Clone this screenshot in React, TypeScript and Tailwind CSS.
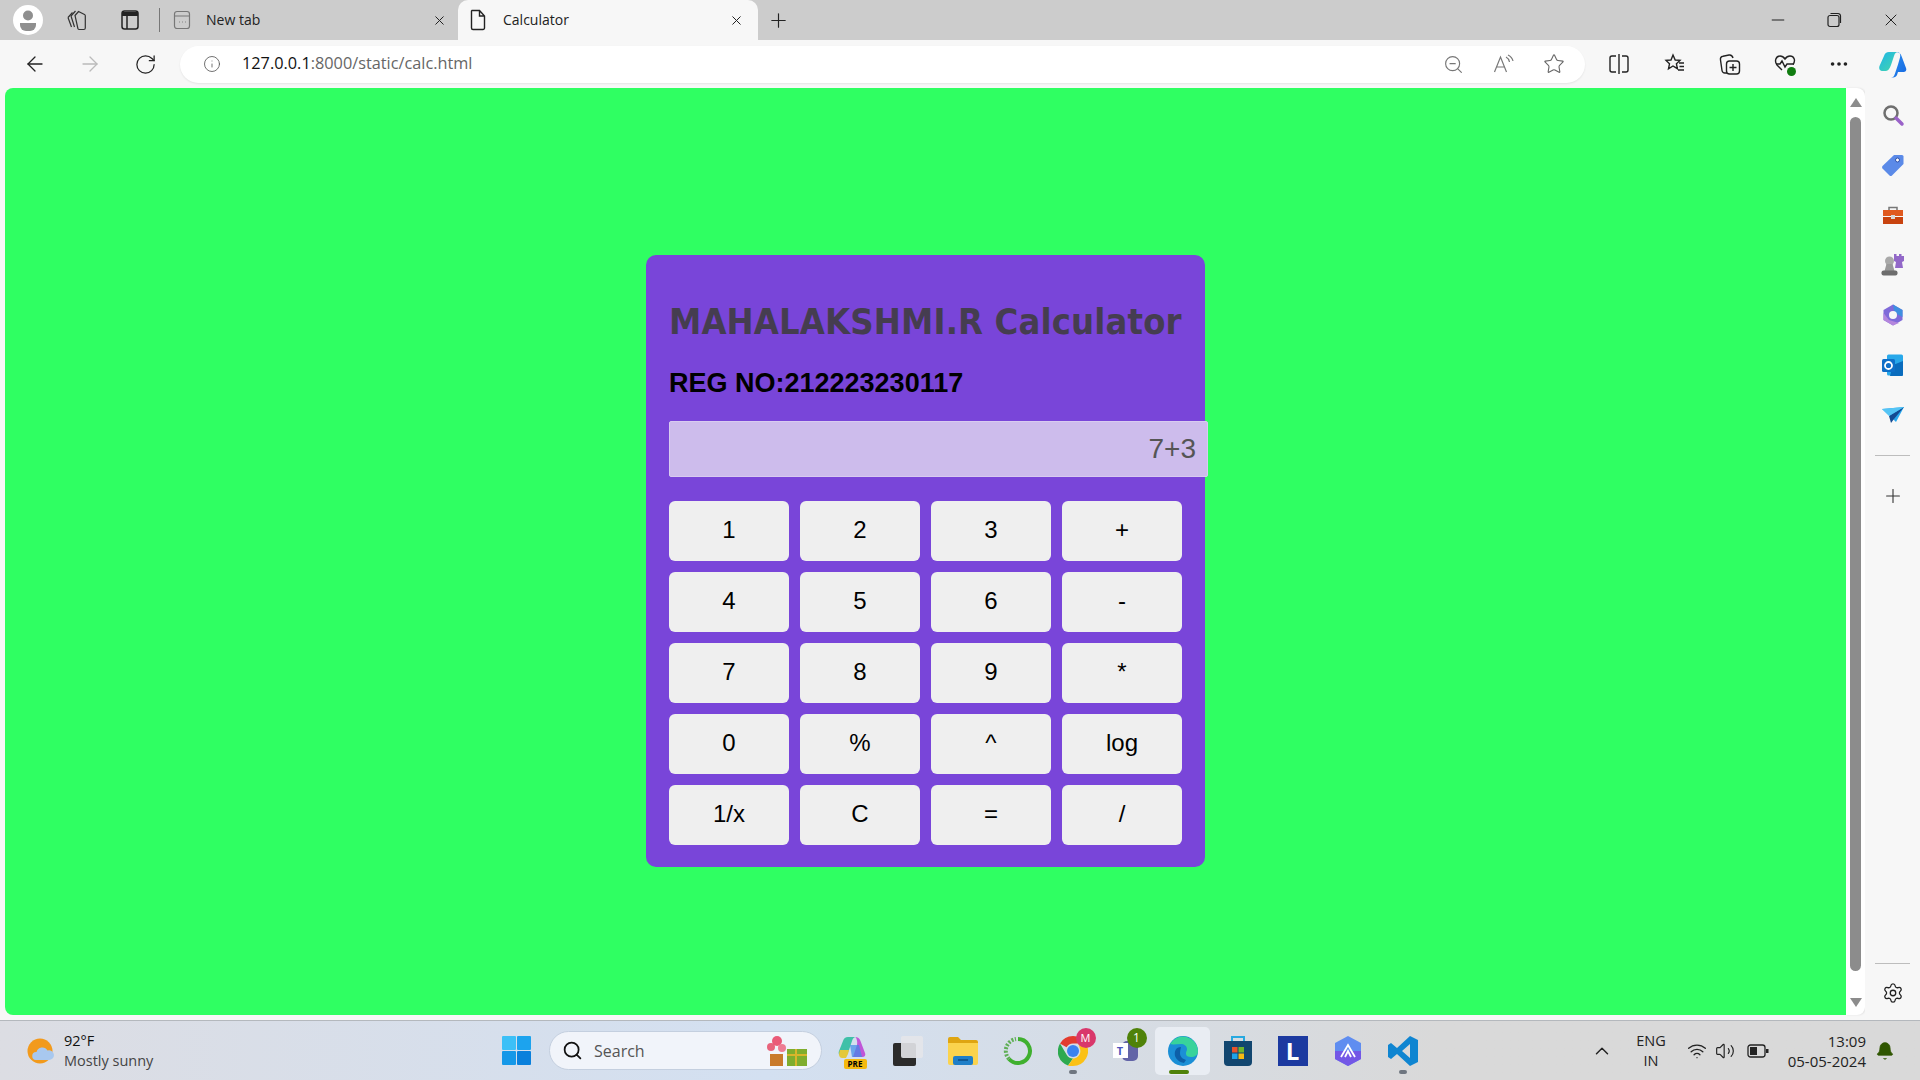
import { ArrowLeft, ArrowRight, Bell, ChevronUp, Info, Minus, MoreHorizontal, Plus, RotateCw, Search, Settings, Star, Volume2, Wifi, X, ZoomOut } from 'lucide-react';

const sans = 'font-["Open_Sans",sans-serif]';

const keys = ['1', '2', '3', '+', '4', '5', '6', '-', '7', '8', '9', '*', '0', '%', '^', 'log', '1/x', 'C', '=', '/'];

function Calculator() {
  return (
    <div className='w-[559px] h-[612px] bg-[#7945d9] rounded-[10px] pt-[46px] px-[23px] font-["Liberation_Sans",sans-serif]'>
      <h1 className='h-[42px] font-["DejaVu_Sans_Condensed","DejaVu_Sans",sans-serif] font-bold text-[36px] leading-[42px] tracking-[0.15px] text-[#453d50] whitespace-nowrap'>
        MAHALAKSHMI.R Calculator
      </h1>
      <h2 className="mt-[24px] h-[32px] font-bold text-[27px] leading-[32px] text-black">REG NO:212223230117</h2>
      <div className="mt-[22px] w-[539px] h-[56px] bg-[#cdbcec] border border-[#d8cbf0] rounded-[2px] pr-[11px] flex items-center justify-end text-[28px] text-[#555]">
        7+3
      </div>
      <div className="mt-[24px] grid grid-cols-[repeat(4,120px)] auto-rows-[60px] gap-[11px]">
        {keys.map(key => (
          <button key={key} className="bg-[#efefef] rounded-[6px] pb-[2px] text-[24px] text-black">
            {key}
          </button>
        ))}
      </div>
    </div>
  );
}

function Tab({ title, active, icon }: { title: string; active?: boolean; icon: React.ReactNode }) {
  return (
    <div className={`h-10 w-[300px] flex items-center pl-[11px] pr-[14px] text-[14px] text-[#222] ${active ? 'bg-[#f7f7f7] rounded-t-[10px]' : ''}`}>
      <span className="w-[34px] flex">{icon}</span>
      <span className="flex-1 -mt-[2px]">{title}</span>
      <X size={15} strokeWidth={1.6} className="text-[#222]" />
    </div>
  );
}

function TabBar() {
  return (
    <div className={`h-10 bg-[#cccccc] flex items-center ${sans}`}>
      <div className="ml-[13px] w-[30px] h-[30px] rounded-full bg-white flex items-center justify-center">
        <svg width="22" height="24" viewBox="0 0 22 24">
          <circle cx="11" cy="7.5" r="5" fill="#8f8f8f" />
          <path d="M3 15h16v2a6 6 0 0 1-6 6H9a6 6 0 0 1-6-6z" fill="#8f8f8f" />
        </svg>
      </div>
      <svg className="ml-[23px]" width="22" height="24" viewBox="0 0 22 24" fill="none" stroke="#333" strokeWidth="1.2">
        <path d="M2 9.500L6.500 4.500M2 9.500l3.500 9.500" />
        <path d="M5 8l4.500-5 M5 8l3.500 11" />
        <path d="M9 7.500L12.500 3.500l6 3a1.500 1.500 0 0 1 .8 1.300V20a1.500 1.500 0 0 1-1.500 1.500h-4.500a1.500 1.500 0 0 1-1.400-1z" />
      </svg>
      <svg className="ml-[32px]" width="20" height="22" viewBox="0 0 20 22" fill="none" stroke="#222" strokeWidth="1.5">
        <rect x="2" y="2" width="16" height="18" rx="2.500" />
        <path d="M2 5h16" strokeWidth="4" />
        <path d="M7 6v14" />
      </svg>
      <div className="ml-[19px] w-px h-[24px] bg-[#777]" />
      <div className="ml-[1px] w-[297px]">
        <Tab
          title="New tab"
          icon={
            <svg width="20" height="20" viewBox="0 0 20 20" fill="none" stroke="#777" strokeWidth="1.2">
              <rect x="2.500" y="1.500" width="15" height="17" rx="2.500" />
              <path d="M2.500 6h15M7 12h.8M10 12h.8M13 12h.8" />
            </svg>
          }
        />
      </div>
      <Tab
        title="Calculator"
        active
        icon={
          <svg width="18" height="22" viewBox="0 0 18 22" fill="none" stroke="#222" strokeWidth="1.4">
            <path d="M3 1.500h7.500L15.500 7v12a1.500 1.500 0 0 1-1.500 1.500H4A1.500 1.500 0 0 1 2.500 19V2zM10.500 1.500V7h5" />
          </svg>
        }
      />
      <Plus size={23} strokeWidth={1.2} className="ml-[9px] text-[#222]" />
      <div className="ml-auto flex items-center">
        <Minus size={20} strokeWidth={1.2} className="text-[#222]" />
        <svg className="ml-[37px]" width="18" height="18" viewBox="0 0 18 18" fill="none" stroke="#222" strokeWidth="1.2">
          <rect x="3" y="4.500" width="11" height="11" rx="2" />
          <path d="M5.500 2.500h7.500a2.500 2.500 0 0 1 2.500 2.500v7" />
        </svg>
        <X size={20} strokeWidth={1.2} className="ml-[38px] mr-[19px] text-[#222]" />
      </div>
    </div>
  );
}

function Copilot({ size = 30, id = 'cp' }: { size?: number; id?: string }) {
  return (
    <svg width={size} height={size} viewBox="0 0 30 30">
      <defs>
        <linearGradient id={`${id}1`} x1="0" y1="0" x2="1" y2="1">
          <stop offset="0" stopColor="#1fb5e8" />
          <stop offset="1" stopColor="#47d8a8" />
        </linearGradient>
        <linearGradient id={`${id}2`} x1="0" y1="0" x2="1" y2="1">
          <stop offset="0" stopColor="#2b8ff0" />
          <stop offset="1" stopColor="#1667e0" />
        </linearGradient>
      </defs>
      <path d="M11 3h9c-2 0-3 1-4 4l-3 9c-1 3-3 6-5 6H5c-3 0-4.500-2-3.500-5L6 7c.8-2.500 2.500-4 5-4z" fill={`url(#${id}1)`} />
      <path d="M18 3c3 0 4.500 1.500 5.500 4L28 19c1 2.500-.5 4-3 4h-5l-1 3c-.7 1.500-2 2.500-4 2.500h-2c2 0 3-1 4-4l3-9 2-7c.8-3-.5-5.500-2-5.500z" fill={`url(#${id}2)`} />
    </svg>
  );
}

function Toolbar() {
  return (
    <div className={`h-12 bg-[#f7f7f7] flex items-center ${sans}`}>
      <ArrowLeft size={24} strokeWidth={1.3} className="ml-[23px] text-[#222]" />
      <ArrowRight size={24} strokeWidth={1.3} className="ml-[31px] text-[#bbb]" />
      <RotateCw size={23} strokeWidth={1.3} className="ml-[32px] text-[#222]" />
      <div className="ml-[23px] w-[1405px] h-[37px] bg-white rounded-full shadow-[0_1px_2px_rgba(0,0,0,0.08)] flex items-center pl-[23px]">
        <Info size={18} strokeWidth={1.1} className="text-[#555]" />
        <span className="ml-[21px] text-[16.300px] -mt-[1px] text-[#666]">
          <span className="text-[#111]">127.0.0.1</span>:8000/static/calc.html
        </span>
        <ZoomOut size={21} strokeWidth={1.3} className="ml-auto text-[#777]" />
        <svg className="ml-[29px]" width="22" height="20" viewBox="0 0 22 20" fill="none" stroke="#777" strokeWidth="1.2">
          <path d="M1.500 18L7.500 3l6 15M3.800 13h7.500M13 3c2 1 3 2.500 3.500 5M15 1c3 1.500 4.500 3.500 5 6" />
        </svg>
        <Star size={22} strokeWidth={1.2} className="ml-[28px] mr-[20px] text-[#666]" />
      </div>
      <svg className="ml-[23px]" width="22" height="22" viewBox="0 0 22 22" fill="none" stroke="#222" strokeWidth="1.4">
        <path d="M8 3H4a2 2 0 0 0-2 2v12a2 2 0 0 0 2 2h4M14 3h4a2 2 0 0 1 2 2v12a2 2 0 0 1-2 2h-4M11 1v20" />
      </svg>
      <svg className="ml-[34px]" width="22" height="22" viewBox="0 0 22 22" fill="none" stroke="#222" strokeWidth="1.4">
        <path d="M9 2l2.200 5 4.800.4-3.600 3.300 1 5L9 13l-4.500 2.800 1-5L2 7.400 7 7z" />
        <path d="M15 10h5M15.500 13.500h4.500M14 17h6" />
      </svg>
      <svg className="ml-[33px]" width="22" height="22" viewBox="0 0 22 22" fill="none" stroke="#222" strokeWidth="1.4">
        <path d="M8 20H6a3 3 0 0 1-3-2.500L1.500 7c-.3-2 .8-3.500 2.500-3.800L10 2c2-.3 3.500 1 4 3" />
        <rect x="7.500" y="8" width="13" height="13" rx="3" />
        <path d="M14 11v7M10.500 14.500h7" />
      </svg>
      <div className="ml-[33px] relative w-[22px] h-[22px]">
        <svg width="22" height="22" viewBox="0 0 22 22" fill="none" stroke="#222" strokeWidth="1.4">
          <path d="M8 17l-5-5C0 8 2 3 6 3c2.500 0 4 1.500 5 3 1-1.500 2.500-3 5-3 4 0 6 4.500 3 8.500" />
          <path d="M2 11h4l2-3 3 6 2-3h7" />
        </svg>
        <div className="absolute right-[0px] -bottom-[1px] w-[9px] h-[9px] rounded-full bg-[#107c10]" />
      </div>
      <MoreHorizontal size={22} strokeWidth={2} className="ml-[32px] text-[#222]" />
      <div className="ml-[28px]">
        <Copilot />
      </div>
    </div>
  );
}

function Sidebar() {
  return (
    <div className="w-[55px] flex flex-col items-center pt-[2px] pb-[11px] bg-[#f7f7f7]">
      <div className="h-[50px] flex items-center">
        <svg width="24" height="24" viewBox="0 0 24 24" fill="none">
          <circle cx="10" cy="10" r="6.500" stroke="#6f6f6f" strokeWidth="2.500" />
          <path d="M15 15l6 6" stroke="#9a62c9" strokeWidth="3.500" strokeLinecap="round" />
        </svg>
      </div>
      <div className="h-[50px] flex items-center">
        <svg width="24" height="24" viewBox="0 0 24 24">
          <path d="M13 2h8a1.500 1.500 0 0 1 1.500 1.500V11L11 22.500a2 2 0 0 1-2.500 0l-7-7a2 2 0 0 1 0-2.500z" fill="#5b8ae8" />
          <circle cx="16.500" cy="7" r="2" fill="#fff" stroke="#2d4fa8" />
        </svg>
      </div>
      <div className="h-[50px] flex items-center">
        <svg width="24" height="24" viewBox="0 0 24 24">
          <path d="M8 7V4.500h8V7" fill="none" stroke="#777" strokeWidth="1.500" />
          <path d="M2 7h20v6H2z" fill="#e0591f" />
          <path d="M2 14h20v7H2z" fill="#c8430f" />
          <rect x="10" y="12" width="4" height="4" fill="#d8d8d8" />
        </svg>
      </div>
      <div className="h-[50px] flex items-center">
        <svg width="24" height="24" viewBox="0 0 24 24">
          <circle cx="8.500" cy="8" r="4.500" fill="#a9a9a9" />
          <path d="M5.500 11h6l2 7H3.500z" fill="#9a9a9a" />
          <rect x="0.500" y="17.500" width="16" height="5" rx="2" fill="#6d6d6d" />
          <path d="M13 1h2.500v2H18V1h2.500v2H23V1v7l-2 1 1 6h-8l1-6-2-1z" fill="#9268c8" />
        </svg>
      </div>
      <div className="h-[50px] flex items-center">
        <svg width="24" height="24" viewBox="0 0 24 24" fill="none">
          <path d="M12 1.500l9.500 5.500v10L12 22.500 2.500 17V7z" fill="#7f6ad9" />
          <path d="M12 1.500l9.500 5.500v7L16 11l-3-3.500z" fill="#3f8fe0" />
          <path d="M2.500 10v7l9.500 5.500 6-2.500-10-3z" fill="#b486dd" />
          <circle cx="12" cy="12" r="4" fill="#f7f7f7" />
        </svg>
      </div>
      <div className="h-[50px] flex items-center">
        <svg width="24" height="24" viewBox="0 0 24 24">
          <rect x="6" y="1.500" width="16" height="21" rx="1.500" fill="#28a8ea" />
          <path d="M12 12l10-4v14a1 1 0 0 1-1 1H9z" fill="#0a6cbd" />
          <rect x="1" y="6" width="13" height="13" rx="1.500" fill="#0f6fc8" />
          <circle cx="7.500" cy="12.500" r="3.500" fill="none" stroke="#fff" strokeWidth="1.800" />
        </svg>
      </div>
      <div className="h-[50px] flex items-center">
        <svg width="24" height="24" viewBox="0 0 24 24">
          <path d="M1 6l22-2-8 15-5-5z" fill="#2aa8ee" />
          <path d="M23 4L8 13l2 7 3-4z" fill="#134a92" />
          <path d="M1 6l7 7 15-9z" fill="#54c4f5" />
        </svg>
      </div>
      <div className="mt-[15px] w-[35px] h-px bg-[#bdbdbd]" />
      <Plus size={22} strokeWidth={1.2} className="mt-[29px] text-[#333]" />
      <div className="mt-auto w-[35px] h-px bg-[#bdbdbd]" />
      <Settings size={22} strokeWidth={1.4} className="mt-[18px] text-[#222]" />
    </div>
  );
}

function AppIcon({ children, active, running }: { children: React.ReactNode; active?: boolean; running?: boolean }) {
  return (
    <div className={`relative w-[55px] h-[48px] flex items-center justify-center rounded-[5px] ${active ? 'bg-[#e9edf3]' : ''}`}>
      {children}
      {active && <div className="absolute bottom-[1px] left-[14px] w-[20px] h-[4px] rounded-full bg-[#4f8209]" />}
      {running && <div className="absolute bottom-[1px] left-[24px] w-[8px] h-[4px] rounded-full bg-[#6f7680]" />}
    </div>
  );
}

function Taskbar() {
  return (
    <div className={`h-[60px] border-t border-[#b4b8bd] bg-linear-to-r from-[#dcdde3] via-[#d3e0f1] via-40% to-[#d9d9d9] to-75% flex items-center ${sans}`}>
      <svg className="ml-[27px]" width="28" height="28" viewBox="0 0 28 28">
        <circle cx="13" cy="14" r="12.500" fill="#f29a1c" />
        <path d="M9 23a4 4 0 0 1 .5-8 6 6 0 0 1 11-1.500A5 5 0 0 1 27 18a5 5 0 0 1-5 5z" fill="#a8c8ef" />
      </svg>
      <div className="ml-[9px] w-[170px] text-[14.500px] leading-[20px] text-[#444]">
        <div className="text-[#111]">92°F</div>
        <div>Mostly sunny</div>
      </div>
      <svg className="ml-[268px]" width="29" height="29" viewBox="0 0 29 29">
        <rect x="0" y="0" width="14" height="14" rx="1" fill="#3cc0f7" />
        <rect x="15" y="0" width="14" height="14" rx="1" fill="#1ca3ee" />
        <rect x="0" y="15" width="14" height="14" rx="1" fill="#1598e8" />
        <rect x="15" y="15" width="14" height="14" rx="1" fill="#0a80dc" />
      </svg>
      <div className="ml-[18px] w-[273px] h-[39px] rounded-full bg-[#f1f4fa] border border-[#c4cfdf] flex items-center pl-[12px] text-[#555] text-[16px]">
        <Search size={21} strokeWidth={2} className="text-[#111]" />
        <span className="ml-[11px]">Search</span>
        <svg className="ml-auto mr-[13px]" width="44" height="32" viewBox="0 0 44 32">
          <rect x="6" y="19" width="13" height="12" fill="#c97a2a" />
          <circle cx="7" cy="12" r="4" fill="#e8637c" />
          <circle cx="13" cy="6" r="5" fill="#ea5a78" />
          <circle cx="18" cy="13" r="4" fill="#ed7d93" />
          <rect x="23" y="14" width="20" height="17" fill="#7fad2e" />
          <path d="M32 14v17M23 20h20" stroke="#d8b52b" strokeWidth="2" />
        </svg>
      </div>
      <div className="ml-[3px] flex items-center">
        <AppIcon>
          <div className="relative w-[30px] h-[30px]">
            <svg width="30" height="28" viewBox="0 0 30 28">
              <path d="M10 1h8c-2 0-3 1-4 4l-3 9c-1 3-3 6-5 6H4c-2.500 0-4-2-3-5L5 5c.8-2.500 2.500-4 5-4z" fill="#3fc0a8" />
              <path d="M2 14h9l-1 4-2 4H4c-2.500 0-4-3-2-8z" fill="#e4c83a" />
              <path d="M17 1c3 0 4.500 1.500 5.500 4L27 17c1 2.500-.5 4-3 4h-9l4-12c.8-3-.5-8-2-8z" fill="#c056d8" />
              <path d="M12 9h9l3 12h-10z" fill="#3f8ae8" opacity="0.7" />
            </svg>
            <div className="absolute -bottom-[3px] left-[6px] w-[23px] h-[10px] rounded-[2px] bg-[#f5b90f] text-[8px] leading-[10px] font-bold text-black text-center">PRE</div>
          </div>
        </AppIcon>
        <AppIcon>
          <div className="relative w-[30px] h-[30px]">
            <div className="absolute left-0 bottom-0 w-[23px] h-[23px] rounded-[2px] bg-[#2b2b2b]" />
            <div className="absolute right-0 top-0 w-[22px] h-[22px] rounded-[2px] bg-[#e4e6ea]/90" />
          </div>
        </AppIcon>
        <AppIcon>
          <svg width="30" height="28" viewBox="0 0 30 28">
            <path d="M0 2a2 2 0 0 1 2-2h8l3 3h15a2 2 0 0 1 2 2v4H0z" fill="#dfa511" />
            <path d="M0 6h30v20a2 2 0 0 1-2 2H2a2 2 0 0 1-2-2z" fill="#fbd34d" />
            <rect x="5" y="19" width="20" height="9" rx="2" fill="#1f7fc8" />
            <path d="M10 23h10" stroke="#0d4d84" strokeWidth="1.500" />
          </svg>
        </AppIcon>
        <AppIcon>
          <svg width="30" height="30" viewBox="0 0 30 30" fill="none">
            <path d="M15 3a12 12 0 1 1-9 20" stroke="#3fb02f" strokeWidth="4" />
            <path d="M6 23a12 12 0 0 1 7-20" stroke="#5fae55" strokeWidth="4" strokeDasharray="2 1.500" />
          </svg>
        </AppIcon>
        <AppIcon running>
          <div className="relative w-[30px] h-[30px]">
            <svg width="30" height="30" viewBox="0 0 30 30">
              <path d="M15 0a15 15 0 0 1 13 7.500H15a7.500 7.500 0 0 0-6.500 3.800L2 7.500A15 15 0 0 1 15 0z" fill="#e33b2e" />
              <path d="M2 7.500l6.500 11A7.500 7.500 0 0 0 15 22.500L10 29.500A15 15 0 0 1 2 7.500z" fill="#2da94f" />
              <path d="M28 7.500A15 15 0 0 1 15 30h-5l5-7.500a7.500 7.500 0 0 0 6.500-11A7.500 7.500 0 0 0 20 7.500z" fill="#fbc116" />
              <circle cx="15" cy="15" r="6" fill="#3b82f0" />
            </svg>
            <div className="absolute -top-[8px] -right-[8px] w-[20px] h-[20px] rounded-full bg-[#d9376b] text-white text-[11px] leading-[20px] text-center">M</div>
          </div>
        </AppIcon>
        <AppIcon>
          <div className="relative w-[30px] h-[30px]">
            <div className="absolute left-[9px] top-[5px] w-[16px] h-[20px] rounded-[5px] bg-[#6264a7]" />
            <div className="absolute left-0 top-[7px] w-[15px] h-[15px] bg-white text-[#4b53bc] text-[11px] leading-[15px] font-bold text-center">T</div>
            <div className="absolute -top-[8px] right-[-4px] w-[20px] h-[20px] rounded-full bg-[#4f8209] text-white text-[12px] leading-[20px] text-center">1</div>
          </div>
        </AppIcon>
        <AppIcon active>
          <svg width="30" height="30" viewBox="0 0 30 30">
            <circle cx="15" cy="15" r="15" fill="#1b8fd6" />
            <path d="M2 8A15 15 0 0 1 30 15c0 4-3 6-7 6-3 0-5-1-5-3 0-3 1-3 1-5 0-3-3-5-6-5-4 0-8 1-11 0z" fill="#38d39b" />
            <path d="M13 11c-5 0-7 4-6 9 1 3 4 6 9 7l2-3c-3-1-6-3-6-7 0-3 1-5 1-6z" fill="#0d5fa8" />
          </svg>
        </AppIcon>
        <AppIcon>
          <svg width="30" height="32" viewBox="0 0 30 32">
            <path d="M9 6V2h12v4" fill="none" stroke="#27a9e0" strokeWidth="2" />
            <path d="M1 6h28v21a4 4 0 0 1-4 4H5a4 4 0 0 1-4-4z" fill="#12466f" />
            <rect x="9" y="12" width="5.500" height="5.500" fill="#e8532b" />
            <rect x="15.500" y="12" width="5.500" height="5.500" fill="#6fb52c" />
            <rect x="9" y="18.500" width="5.500" height="5.500" fill="#1fa3e8" />
            <rect x="15.500" y="18.500" width="5.500" height="5.500" fill="#f6b912" />
          </svg>
        </AppIcon>
        <AppIcon>
          <div className="w-[30px] h-[30px] bg-[#1c3aa0] text-white text-[24px] leading-[30px] font-bold text-center">L</div>
        </AppIcon>
        <AppIcon>
          <svg width="28" height="30" viewBox="0 0 28 30">
            <path d="M14 0l13 7v16l-13 7-13-7V7z" fill="#5f8df0" />
            <path d="M1 15h26v8l-13 7-13-7z" fill="#7357e6" />
            <path d="M7 21l7-12 7 12M11 21l3-6 3 6" fill="none" stroke="#fff" strokeWidth="1.800" />
          </svg>
        </AppIcon>
        <AppIcon running>
          <svg width="30" height="30" viewBox="0 0 30 30">
            <path d="M22 0l8 4v22l-8 4-13-12-6 5-3-2V9l3-2 6 5zm0 8l-8 7 8 7z" fill="#0f85d1" />
          </svg>
        </AppIcon>
      </div>
      <ChevronUp size={22} strokeWidth={1.6} className="ml-[161px] text-[#222]" />
      <div className="ml-[18px] w-[40px] text-center text-[14.500px] leading-[20px] text-[#222]">
        ENG
        <br />
        IN
      </div>
      <Wifi size={20} strokeWidth={1.6} className="ml-[16px] text-[#222]" />
      <Volume2 size={20} strokeWidth={1.4} className="ml-[8px] text-[#222]" />
      <svg className="ml-[12px]" width="22" height="14" viewBox="0 0 22 14">
        <rect x="1" y="1" width="17" height="12" rx="2.500" fill="none" stroke="#222" strokeWidth="1.300" />
        <rect x="3" y="3" width="7" height="8" fill="#222" />
        <rect x="19" y="5" width="2.500" height="4" fill="#222" />
      </svg>
      <div className="ml-auto text-right text-[15px] leading-[20px] text-[#222]">
        13:09
        <br />
        05-05-2024
      </div>
      <Bell size={20} fill="#2f5600" strokeWidth={1} className="ml-[9px] mr-[25px] text-[#2f5600]" />
    </div>
  );
}

export default function App() {
  return (
    <div className="w-screen h-screen overflow-hidden flex flex-col bg-[#f7f7f7]">
      <TabBar />
      <Toolbar />
      <div className="flex-1 flex min-h-0 pl-[5px] pb-[5px]">
        <div className="flex-1 bg-[#2fff62] rounded-tl-[8px] rounded-bl-[8px] flex items-start justify-center pt-[167px]">
          <Calculator />
        </div>
        <div className="w-[19px] bg-white rounded-tr-[8px] rounded-br-[8px] flex flex-col items-center pt-[10px] pb-[8px] shadow-[1px_0_2px_rgba(0,0,0,0.1)]">
          <div className="w-0 h-0 border-x-[6px] border-x-transparent border-b-[9px] border-b-[#8c8c8c]" />
          <div className="mt-[10px] flex-1 w-[11px] rounded-full bg-[#8c8c8c]" />
          <div className="mt-[27px] w-0 h-0 border-x-[6px] border-x-transparent border-t-[9px] border-t-[#8c8c8c]" />
        </div>
        <Sidebar />
      </div>
      <Taskbar />
    </div>
  );
}
